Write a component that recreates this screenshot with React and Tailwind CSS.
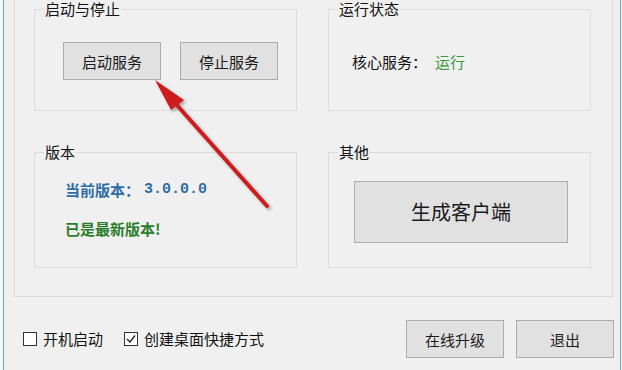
import React from 'react';

const font = { fontFamily: '"Noto Sans CJK SC", "Noto Sans", sans-serif' };

const WinButton = ({ children, className = '' }) => (
  <button className={`bg-[#e1e1e1] border border-[#adadad] text-[#1a1a1a] text-[15px] leading-none flex items-center justify-center ${className}`}>
    {children}
  </button>
);

const Group = ({ title, className = '', children }) => (
  <fieldset className={`border border-[#dcdcdc] px-0 ${className}`}>
    <legend className="ml-[9px] px-[1px] text-[15px] leading-[16px] text-[#111]">{title}</legend>
    {children}
  </fieldset>
);

const CheckBox = ({ checked, label, className = '' }) => (
  <label className={`flex items-center ${className}`}>
    <span className="w-[14px] h-[14px] border border-[#333] bg-white flex items-center justify-center">
      {checked && (
        <svg width="10" height="10" viewBox="0 0 10 10">
          <path d="M1 5 L4 8 L9 1.5" fill="none" stroke="#222" strokeWidth="1.3" />
        </svg>
      )}
    </span>
    <span className="ml-[6px] text-[15px] leading-[20px] text-[#111]">{label}</span>
  </label>
);

export default function App() {
  return (
    <div className="w-[622px] h-[370px] bg-[#f7f7f7] relative overflow-hidden" style={font}>
      <div className="ml-[3px] w-[618px] h-full border-l border-r border-[#5aa6e0] bg-[#f0f0f0] flex flex-col">
        {/* tab page */}
        <div className="ml-[10px] w-[599px] h-[297px] border-l border-r border-b border-[#dadada] pl-[19px] pt-[1px]">
          <div className="grid grid-cols-[263px_263px] gap-x-[31px] gap-y-[33px]">
            <Group title="启动与停止" className="h-[110px]">
              <div className="mt-[25px] pl-[28px] flex gap-[19px]">
                <WinButton className="w-[98px] h-[38px]">启动服务</WinButton>
                <WinButton className="w-[98px] h-[38px]">停止服务</WinButton>
              </div>
            </Group>
            <Group title="运行状态" className="h-[110px]">
              <div className="mt-[35px] pl-[23px] flex text-[15px] leading-[20px]">
                <span className="text-[#111]">核心服务：</span>
                <span className="ml-[8px] text-[#3a9a3a]">运行</span>
              </div>
            </Group>
            <Group title="版本" className="h-[124px]">
              <div className="pl-[30px] font-bold text-[15px] leading-[20px]">
                <div className="mt-[20px] text-[#2e6da4] flex">
                  <span>当前版本：</span>
                  <span className="ml-[4px]" style={{ fontFamily: '"Liberation Mono", monospace' }}>3.0.0.0</span>
                </div>
                <div className="mt-[19px] text-[#2a7d2a]">已是最新版本!</div>
              </div>
            </Group>
            <Group title="其他" className="h-[124px]">
              <div className="mt-[21px] pl-[25px]">
                <WinButton className="w-[214px] h-[62px] text-[20px]">生成客户端</WinButton>
              </div>
            </Group>
          </div>
        </div>

        {/* bottom bar */}
        <div className="pt-[23px] pl-[19px] pr-[6px] flex items-center h-[61px]">
          <CheckBox label="开机启动" />
          <CheckBox checked label="创建桌面快捷方式" className="ml-[21px]" />
          <div className="ml-auto flex gap-[12px]">
            <WinButton className="w-[98px] h-[38px]">在线升级</WinButton>
            <WinButton className="w-[98px] h-[38px]">退出</WinButton>
          </div>
        </div>
      </div>

      {/* red annotation arrow */}
      <svg className="absolute left-0 top-0 pointer-events-none" width="622" height="370" viewBox="0 0 622 370">
        <defs>
          <filter id="sh" x="-20%" y="-20%" width="140%" height="140%">
            <feDropShadow dx="2" dy="2" stdDeviation="1.5" floodColor="#555" floodOpacity="0.5" />
          </filter>
        </defs>
        <g filter="url(#sh)">
          <path d="M175 103 L267 206" stroke="#cc1d1d" strokeWidth="4" strokeLinecap="round" />
          <polygon points="155,80 184,100 171,110" fill="#cc1d1d" />
        </g>
      </svg>
    </div>
  );
}
